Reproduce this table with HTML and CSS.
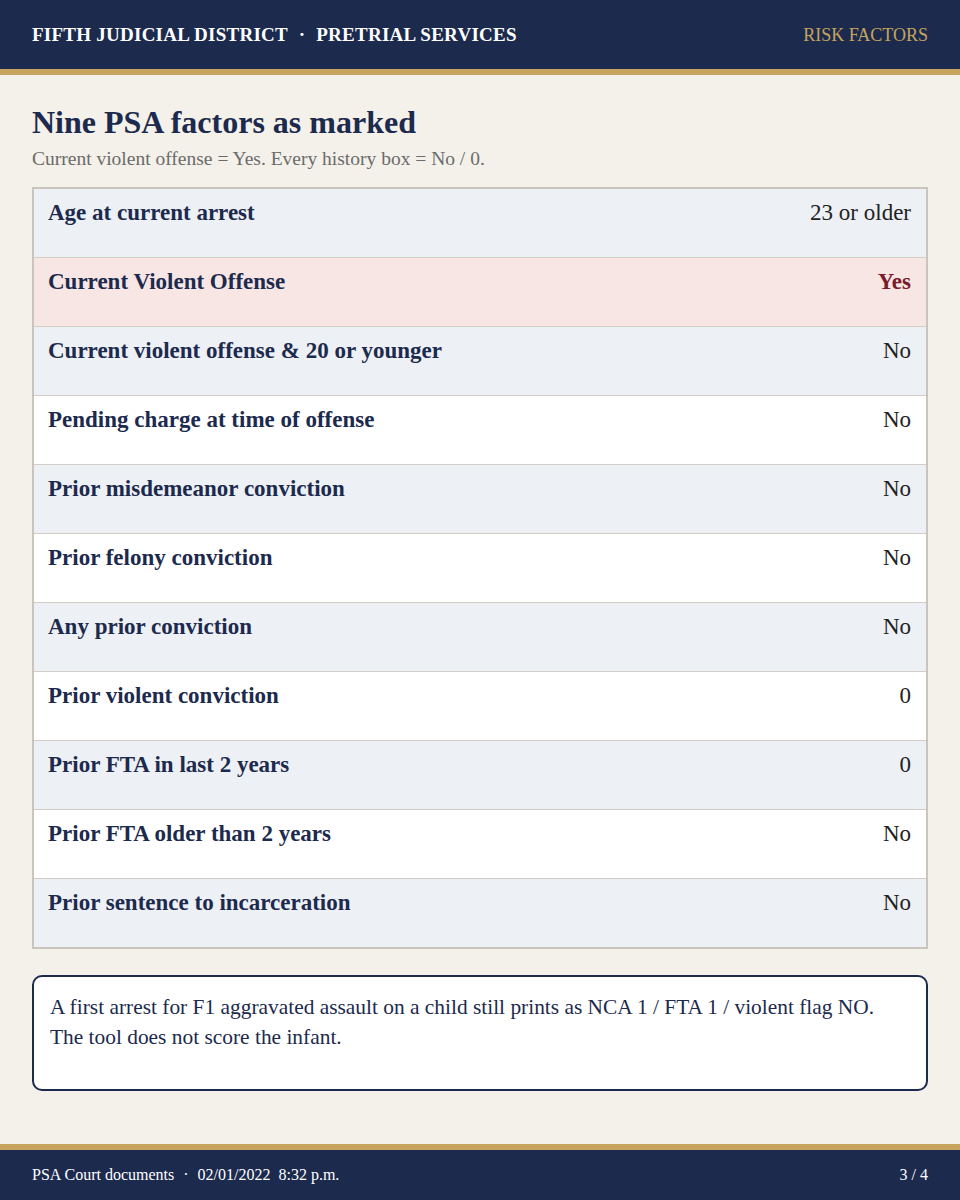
FILE: index.html
```html
<!DOCTYPE html>
<html lang="en">
<head>
    <meta charset="UTF-8">
    <meta name="viewport" content="width=device-width, initial-scale=1.0">
    <title>PSA Risk Factors</title>
    <link rel="stylesheet" href="styles.css">
</head>
<body>
    <header class="top-bar">
        <div class="agency">FIFTH JUDICIAL DISTRICT <span class="dot">·</span> PRETRIAL SERVICES</div>
        <div class="section">RISK FACTORS</div>
    </header>

    <main class="page">
        <h1>Nine PSA factors as marked</h1>
        <p class="sub">Current violent offense = Yes. Every history box = No / 0.</p>

        <div class="factors">
            <div class="row"><span class="label">Age at current arrest</span><span class="val">23 or older</span></div>
            <div class="row flag"><span class="label">Current Violent Offense</span><span class="val">Yes</span></div>
            <div class="row"><span class="label">Current violent offense &amp; 20 or younger</span><span class="val">No</span></div>
            <div class="row"><span class="label">Pending charge at time of offense</span><span class="val">No</span></div>
            <div class="row"><span class="label">Prior misdemeanor conviction</span><span class="val">No</span></div>
            <div class="row"><span class="label">Prior felony conviction</span><span class="val">No</span></div>
            <div class="row"><span class="label">Any prior conviction</span><span class="val">No</span></div>
            <div class="row"><span class="label">Prior violent conviction</span><span class="val">0</span></div>
            <div class="row"><span class="label">Prior FTA in last 2 years</span><span class="val">0</span></div>
            <div class="row"><span class="label">Prior FTA older than 2 years</span><span class="val">No</span></div>
            <div class="row"><span class="label">Prior sentence to incarceration</span><span class="val">No</span></div>
        </div>

        <div class="note">
            A first arrest for F1 aggravated assault on a child still prints as NCA 1 / FTA 1 / violent flag NO.
            The tool does not score the infant.
        </div>
    </main>

    <footer class="bottom-bar">
        <div>PSA Court documents <span class="dot">·</span> 02/01/2022&nbsp; 8:32 p.m.</div>
        <div>3 / 4</div>
    </footer>
</body>
</html>
```

FILE: styles.css
```css
html, body {
    margin: 0;
    padding: 0;
}
body {
    background-color: #f4f1ea;
    color: #1c2a4d;
    font-family: "Liberation Serif", "Times New Roman", serif;
    width: 960px;
    min-height: 1200px;
    display: flex;
    flex-direction: column;
}

/* header */
.top-bar {
    background-color: #1c2a4d;
    border-bottom: 6px solid #c6a45e;
    height: 69px;
    padding: 0 32px;
    display: flex;
    justify-content: space-between;
    align-items: center;
}
.agency {
    color: #ffffff;
    font-weight: bold;
    font-size: 19px;
    letter-spacing: 0.25px;
}
.agency .dot {
    margin: 0 6px;
}
.section {
    color: #c6a45e;
    font-size: 18px;
    padding-top: 2px;
}

.page {
    flex: 1;
    padding: 28px 32px 0;
}
h1 {
    font-size: 32px;
    margin: 0;
    line-height: 38px;
}
.sub {
    font-size: 19.5px;
    color: #6b6b6b;
    margin: 6px 0 17px;
    line-height: 23px;
}

/* factor table */
.factors {
    border: 2px solid #c9c5bd;
    height: 762px;
    box-sizing: border-box;
    display: flex;
    flex-direction: column;
}
.row {
    flex: 1;
    display: flex;
    justify-content: space-between;
    padding: 10px 15px 0 14px;
    border-top: 1px solid #d2cec6;
    background-color: #ffffff;
}
.row:first-child {
    border-top: none;
}
.row:nth-child(odd) {
    background-color: #edf0f5;
}
.row.flag {
    background-color: #f8e6e5;
}
.label {
    font-weight: bold;
    font-size: 23px;
    line-height: 28px;
}
.val {
    font-size: 23px;
    line-height: 28px;
    color: #222222;
}
.flag .val {
    color: #7a1c2c;
    font-weight: bold;
}

.note {
    margin-top: 26px;
    background: #ffffff;
    border: 2px solid #1c2a4d;
    border-radius: 10px;
    height: 116px;
    box-sizing: border-box;
    padding: 15px 16px;
    font-size: 21.4px;
    line-height: 30px;
    color: #1c2a4d;
}

/* footer */
.bottom-bar {
    background-color: #1c2a4d;
    border-top: 6px solid #c6a45e;
    height: 50px;
    padding: 0 32px;
    display: flex;
    justify-content: space-between;
    align-items: center;
    color: #ffffff;
    font-size: 16px;
}
.bottom-bar .dot {
    margin: 0 5px;
}
```
